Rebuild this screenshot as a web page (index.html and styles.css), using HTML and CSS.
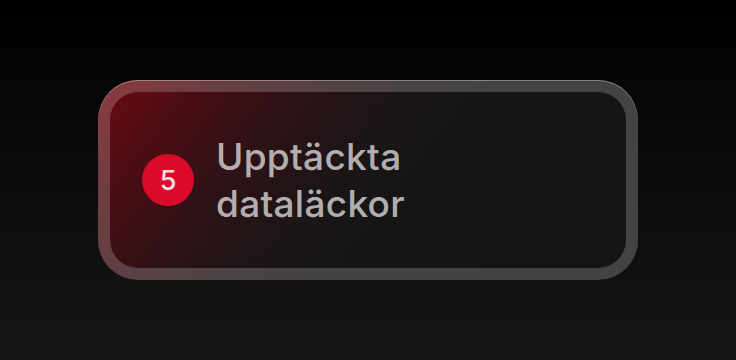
FILE: index.html
```html
<!DOCTYPE html>
<html lang="sv">
<head>
<meta charset="UTF-8" />
<meta name="viewport" content="width=device-width, initial-scale=1" />
<title>Dataläckor</title>
<link rel="stylesheet" href="styles.css">
</head>
<body>

<div class="card">
  <span class="badge">5</span>
  <span class="label">Upptäckta<br>dataläckor</span>
</div>

</body>
</html>
```

FILE: styles.css
```css
html, body {
  height: 100%;
}

body {
  margin: 0;
  display: flex;
  align-items: center;
  justify-content: center;
  font-family: Inter, "Noto Sans", sans-serif;
  background: linear-gradient(180deg, #000 0%, #0b0b0b 45%, #151515 100%);
}

.card {
  box-sizing: border-box;
  width: 540px;
  height: 200px;
  padding: 0 44px;
  border-radius: 40px;
  display: flex;
  align-items: center;
  gap: 22px;
  background: linear-gradient(128deg, #700a10 0%, #4c0d13 14%, #2e1216 29%, #1b1516 45%, #151515 58%, #141414 100%);
  box-shadow:
    inset 0 1px 0 rgba(255,255,255,0.35),
    inset 0 0 0 12px rgba(255,255,255,0.2);
}

.badge {
  flex: none;
  width: 52px;
  height: 52px;
  border-radius: 50%;
  background: #dc0a28;
  color: #fbdde2;
  font-size: 27px;
  font-weight: 500;
  display: flex;
  align-items: center;
  justify-content: center;
}

.label {
  color: rgba(255,255,255,0.68);
  font-size: 37px;
  font-weight: 540;
  line-height: 47px;
  letter-spacing: 0.3px;
}
```
